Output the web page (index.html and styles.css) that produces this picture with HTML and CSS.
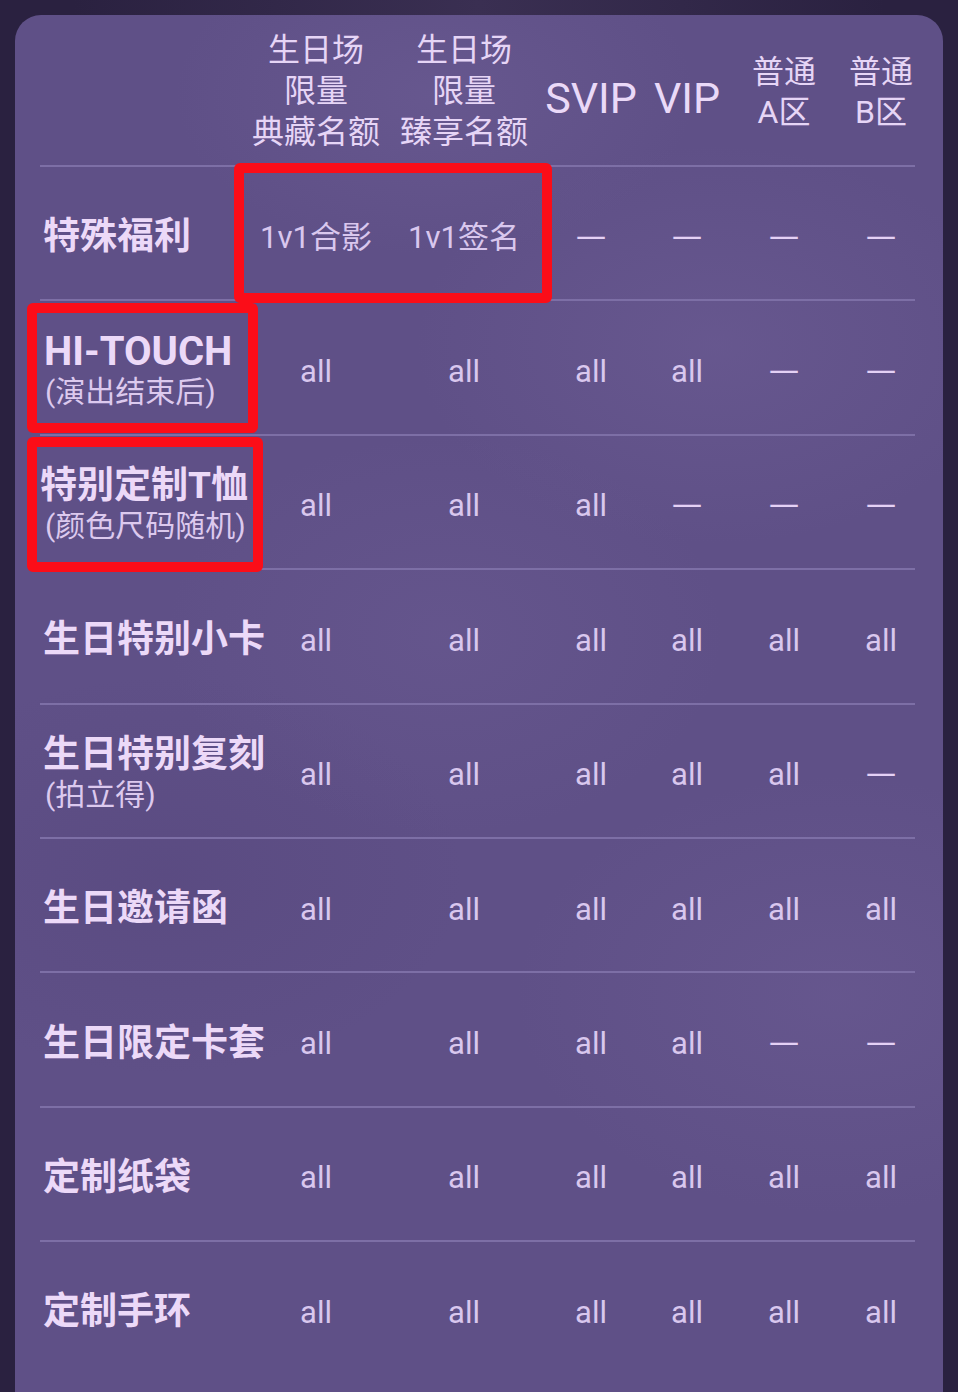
FILE: index.html
```html
<!DOCTYPE html>
<html lang="zh-CN">
<head>
<meta charset="utf-8">
<title>生日场权益</title>
<link rel="stylesheet" href="styles.css">
</head>
<body>
<div class="page">
  <div class="card">
    <div class="row head">
      <div class="cell"></div>
      <div class="cell h3">生日场<br>限量<br>典藏名额</div>
      <div class="cell h3">生日场<br>限量<br>臻享名额</div>
      <div class="cell hbig">SVIP</div>
      <div class="cell hbig">VIP</div>
      <div class="cell h2">普通<br>A区</div>
      <div class="cell h2">普通<br>B区</div>
    </div>

    <div class="row">
      <div class="label"><div class="title">特殊福利</div></div>
      <div class="cell val lift">1v1合影</div>
      <div class="cell val lift">1v1签名</div>
      <div class="cell dash">—</div>
      <div class="cell dash">—</div>
      <div class="cell dash">—</div>
      <div class="cell dash">—</div>
    </div>

    <div class="row">
      <div class="label"><div class="title latin">HI-TOUCH</div><div class="sub">(演出结束后)</div></div>
      <div class="cell val">all</div>
      <div class="cell val">all</div>
      <div class="cell val">all</div>
      <div class="cell val">all</div>
      <div class="cell dash">—</div>
      <div class="cell dash">—</div>
    </div>

    <div class="row">
      <div class="label"><div class="title tee">特别定制T恤</div><div class="sub">(颜色尺码随机)</div></div>
      <div class="cell val">all</div>
      <div class="cell val">all</div>
      <div class="cell val">all</div>
      <div class="cell dash">—</div>
      <div class="cell dash">—</div>
      <div class="cell dash">—</div>
    </div>

    <div class="row">
      <div class="label"><div class="title">生日特别小卡</div></div>
      <div class="cell val">all</div>
      <div class="cell val">all</div>
      <div class="cell val">all</div>
      <div class="cell val">all</div>
      <div class="cell val">all</div>
      <div class="cell val">all</div>
    </div>

    <div class="row">
      <div class="label"><div class="title">生日特别复刻</div><div class="sub">(拍立得)</div></div>
      <div class="cell val">all</div>
      <div class="cell val">all</div>
      <div class="cell val">all</div>
      <div class="cell val">all</div>
      <div class="cell val">all</div>
      <div class="cell dash">—</div>
    </div>

    <div class="row">
      <div class="label"><div class="title">生日邀请函</div></div>
      <div class="cell val">all</div>
      <div class="cell val">all</div>
      <div class="cell val">all</div>
      <div class="cell val">all</div>
      <div class="cell val">all</div>
      <div class="cell val">all</div>
    </div>

    <div class="row">
      <div class="label"><div class="title">生日限定卡套</div></div>
      <div class="cell val">all</div>
      <div class="cell val">all</div>
      <div class="cell val">all</div>
      <div class="cell val">all</div>
      <div class="cell dash">—</div>
      <div class="cell dash">—</div>
    </div>

    <div class="row">
      <div class="label"><div class="title">定制纸袋</div></div>
      <div class="cell val">all</div>
      <div class="cell val">all</div>
      <div class="cell val">all</div>
      <div class="cell val">all</div>
      <div class="cell val">all</div>
      <div class="cell val">all</div>
    </div>

    <div class="row">
      <div class="label"><div class="title">定制手环</div></div>
      <div class="cell val">all</div>
      <div class="cell val">all</div>
      <div class="cell val">all</div>
      <div class="cell val">all</div>
      <div class="cell val">all</div>
      <div class="cell val">all</div>
    </div>

    <div class="mark mark-1"></div>
    <div class="mark mark-2"></div>
    <div class="mark mark-3"></div>
  </div>
</div>
</body>
</html>
```

FILE: styles.css
```css
* { box-sizing: border-box; }

html, body {
  margin: 0;
  padding: 0;
}

body {
  width: 958px;
  height: 1392px;
  overflow: hidden;
  background: #2a2140;
  font-family: "Roboto", "Noto Sans CJK SC", sans-serif;
}

.page {
  padding: 15px 15px 0 15px;
  background:
    radial-gradient(ellipse at 50% 0%, #3a2f52 0%, rgba(42,33,64,0) 60%),
    #2a2140;
  height: 1392px;
}

.card {
  position: relative;
  width: 928px;
  height: 1400px;
  border-radius: 26px 26px 0 0;
  padding: 0 28px 0 25px;
  background:
    radial-gradient(ellipse 260px 160px at 420px 80px, rgba(120,104,160,0.30), rgba(120,104,160,0) 100%),
    radial-gradient(ellipse 300px 200px at 700px 330px, rgba(125,108,165,0.25), rgba(125,108,165,0) 100%),
    radial-gradient(ellipse 280px 200px at 430px 620px, rgba(125,108,165,0.18), rgba(125,108,165,0) 100%),
    radial-gradient(ellipse 320px 220px at 820px 980px, rgba(125,108,165,0.22), rgba(125,108,165,0) 100%),
    radial-gradient(ellipse 300px 200px at 150px 860px, rgba(80,64,118,0.30), rgba(80,64,118,0) 100%),
    #5f5087;
}

.row {
  display: grid;
  grid-template-columns: 202px 148px 148px 106px 86px 108px 86px;
  width: 875px;
  height: 134.4px;
  border-top: 2px solid #7d6fa6;
  padding-top: 8px;
  align-items: center;
}

.row.head {
  height: 150px;
  border-top: none;
  padding-top: 0;
}

.cell {
  text-align: center;
  color: #e6d5f6;
}

.h3 {
  font-size: 32px;
  line-height: 41px;
  padding-top: 2px;
}

.h2 {
  font-size: 32px;
  line-height: 40px;
  padding-top: 3px;
}

.hbig {
  font-size: 43px;
  line-height: 48px;
  padding-top: 16px;
  color: #ead9f8;
}

.label {
  color: #ecd9f8;
  padding-left: 3px;
}

.title {
  font-size: 37px;
  font-weight: 700;
  line-height: 40px;
  white-space: nowrap;
}

.title.latin {
  font-size: 40px;
  padding-left: 1px;
}

.title.tee {
  margin-left: -3px;
}

.sub {
  font-size: 30px;
  line-height: 40px;
  color: #dcc9ee;
  white-space: nowrap;
  padding-left: 2px;
}

.val {
  font-size: 31px;
  color: #d9c7ee;
  white-space: nowrap;
}

.val.lift {
  margin-top: -5px;
}

.dash {
  font-size: 42px;
  font-weight: 300;
  line-height: 40px;
  color: #e4d1f5;
  padding-top: 3px;
}

.mark {
  position: absolute;
  border: 10px solid #fb0d18;
  border-radius: 6px;
}

.mark-1 { left: 219px; top: 148px; width: 318px; height: 140px; }
.mark-2 { left: 12px;  top: 288px; width: 231px; height: 130px; }
.mark-3 { left: 12px;  top: 422px; width: 236px; height: 135px; }
```
